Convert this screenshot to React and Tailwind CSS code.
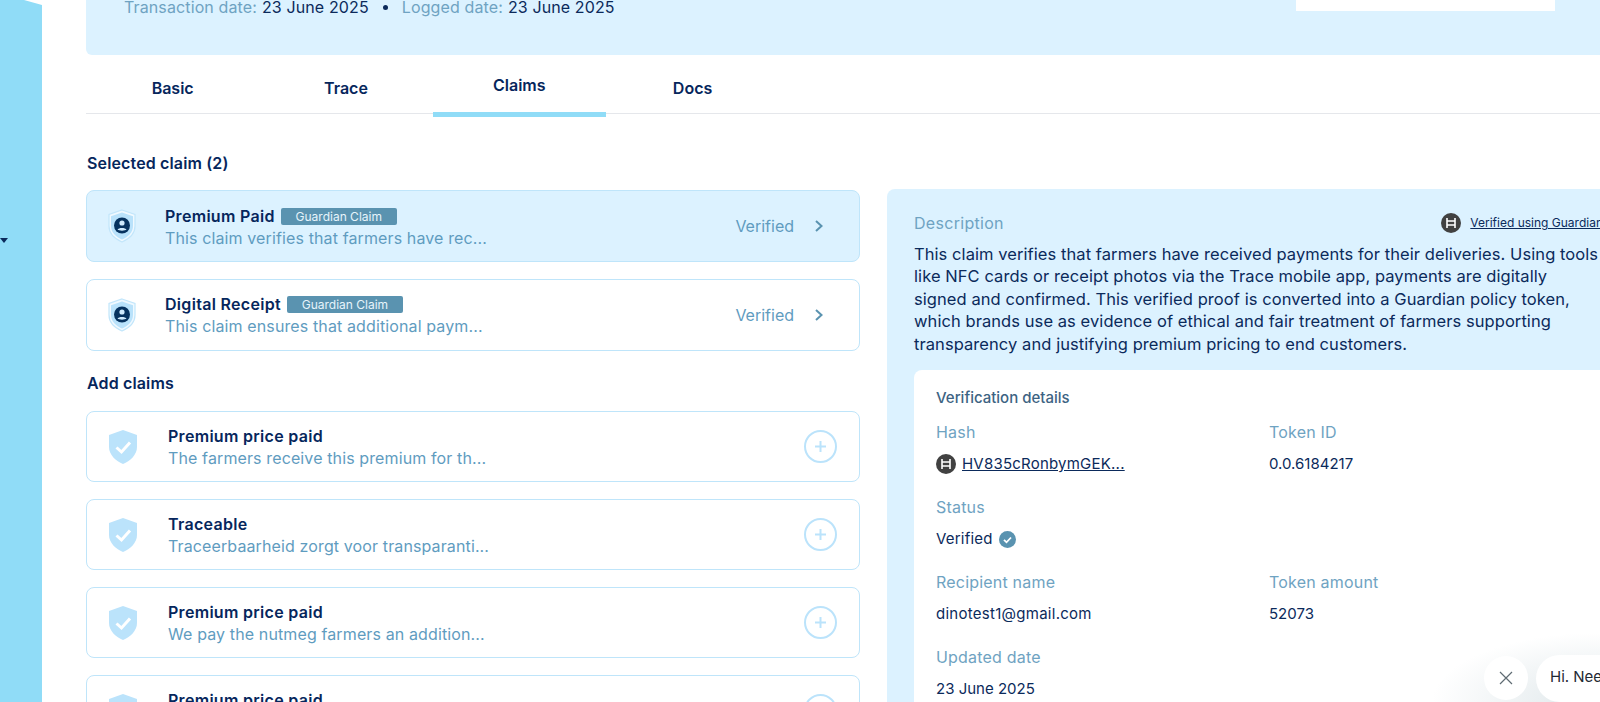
function Hedera({ size = 20 }) {
  return (
    <svg width={size} height={size} viewBox="0 0 20 20" className="shrink-0">
      <circle cx="10" cy="10" r="10" fill="#414141" />
      <path d="M6 5v10M14 5v10M6 8h8M6 12h8" stroke="#fff" strokeWidth="1.6" fill="none" />
    </svg>
  );
}
function ShieldUser() {
  return (
    <svg width="30" height="34" viewBox="0 0 30 34" className="shrink-0">
      <path d="M15 1 L28 5.5 V17 C28 24.5 22 30 15 33 C8 30 2 24.5 2 17 V5.5 Z" fill="#f0f9ff" stroke="#c2e6fb" strokeWidth="1.2" />
      <path d="M15 3.5 L26 7.2 V17 C26 23.5 21 28 15 30.6 C9 28 4 23.5 4 17 V7.2 Z" fill="#b9e2fb" />
      <circle cx="15" cy="16.5" r="8" fill="#06325f" />
      <circle cx="15" cy="14" r="2.6" fill="#cfeafd" />
      <path d="M10.5 20.6 C11.5 18.4 18.5 18.4 19.5 20.6 C18 22 12 22 10.5 20.6 Z" fill="#cfeafd" />
    </svg>
  );
}
function ShieldCheck() {
  return (
    <svg width="28" height="34" viewBox="0 0 28 34" className="shrink-0">
      <path d="M14 0 L28 5 V17 C28 25 21 31 14 34 C7 31 0 25 0 17 V5 Z" fill="#bbe3fb" />
      <path d="M7.5 17.5 L12.5 22 L21 12.5" stroke="#fff" strokeWidth="3" fill="none" />
    </svg>
  );
}
function Selected({ title, desc, active }) {
  return (
    <div className={`h-[72px] rounded-lg border border-[#bfe5fa] flex items-center pl-[20px] pr-[35px] ${active ? "bg-[#dcf2ff]" : "bg-white"}`}>
      <ShieldUser />
      <div className={`ml-[28px] flex-1 min-w-0 ${active ? "pt-[2px]" : "pt-0"}`}>
        <div className="flex items-center h-[22px]">
          <span className="text-[16px] tracking-[0.3px] font-semibold text-[#06265c]">{title}</span>
          <span className="ml-[6px] h-[17px] w-[116px] rounded-[2px] bg-[#5a93b0] text-[#e6f4fb] text-[12px] leading-[17px] text-center">Guardian Claim</span>
        </div>
        <div className="text-[16px] tracking-[0.12px] leading-[22px] text-[#5f9cbf] whitespace-nowrap">{desc}</div>
      </div>
      <span className="text-[16px] text-[#5f9cbf]">Verified</span>
      <svg width="10" height="14" viewBox="0 0 10 14" className="ml-[20px]">
        <path d="M2 2l5.5 5L2 12" stroke="#5a93b0" strokeWidth="2" fill="none" />
      </svg>
    </div>
  );
}
function Addable({ title, desc }) {
  return (
    <div className="h-[71px] rounded-lg border border-[#bfe5fa] bg-white flex items-center pl-[22px] pr-[22px]">
      <ShieldCheck />
      <div className="ml-[31px] flex-1 min-w-0 pt-[1px]">
        <div className="text-[16px] tracking-[0.3px] leading-[22px] font-semibold text-[#06265c]">{title}</div>
        <div className="text-[16px] tracking-[0.12px] leading-[22px] text-[#5f9cbf] whitespace-nowrap">{desc}</div>
      </div>
      <div className="w-[33px] h-[33px] rounded-full border-2 border-[#bbe3fb] flex items-center justify-center">
        <svg width="13" height="13" viewBox="0 0 13 13"><path d="M6.5 1v11M1 6.5h11" stroke="#bbe3fb" strokeWidth="2" /></svg>
      </div>
    </div>
  );
}
function Field({ label, children, className = "" }) {
  return (
    <div className={className}>
      <div className="text-[16px] tracking-[0.2px] leading-[22px] text-[#6fa3c2]">{label}</div>
      <div className="mt-[10px] text-[15px] leading-[22px] text-[#0b2a5b] flex items-center">{children}</div>
    </div>
  );
}
export default function App() {
  return (
    <div className="relative w-[1600px] h-[702px] overflow-hidden bg-white flex font-['Inter',sans-serif]">
      <div className="relative w-[42px] shrink-0 bg-[#90dcf7] [clip-path:polygon(0_0,24px_0,42px_5px,42px_100%,0_100%)]">
        <div className="absolute left-0 top-[238px] w-0 h-0 border-x-[4px] border-x-transparent border-t-[5px] border-t-[#0b2a5b]" />
      </div>
      <main className="ml-[44px] w-[1600px] shrink-0">
        <header className="h-[55px] bg-[#dcf2ff] rounded-bl-md pl-[38px] flex items-start justify-between pr-[45px] w-[1514px]">
          <div className="flex items-center text-[16px] tracking-[0.12px] leading-[16px] text-[#6fa3c2] whitespace-nowrap -mt-[1px]">
            <span>Transaction date:</span><span className="ml-[5px] text-[#0b2a5b]">23 June 2025</span>
            <span className="mx-[14px] w-[5px] h-[5px] rounded-full bg-[#0b2a5b]" />
            <span>Logged date:</span><span className="ml-[5px] text-[#0b2a5b]">23 June 2025</span>
          </div>
          <div className="w-[259px] h-[11px] bg-white" />
        </header>
        <nav className="flex h-[59px] border-b border-[#e5e7eb] w-[1514px]">
          {["Basic", "Trace", "Claims", "Docs"].map((t) => (
            <div key={t} className={`w-[173.3px] text-center text-[16px] font-semibold text-[#06265c] ${t === "Claims" ? "h-[62px] border-b-[5px] border-[#90dcf7] pt-[18px]" : "pt-[21px]"}`}>{t}</div>
          ))}
        </nav>
        <div className="flex mt-[38px]">
          <section className="w-[774px] shrink-0">
            <h2 className="pl-[1px] text-[16px] tracking-[0.14px] leading-[22px] font-semibold text-[#06265c]">Selected claim (2)</h2>
            <div className="mt-[16px] flex flex-col gap-[17px]">
              <Selected active title="Premium Paid" desc="This claim verifies that farmers have rec..." />
              <Selected title="Digital Receipt" desc="This claim ensures that additional paym..." />
            </div>
            <h2 className="pl-[1px] mt-[21px] text-[16px] tracking-[0.14px] leading-[22px] font-semibold text-[#06265c]">Add claims</h2>
            <div className="mt-[17px] flex flex-col gap-[17px]">
              <Addable title="Premium price paid" desc="The farmers receive this premium for th..." />
              <Addable title="Traceable" desc="Traceerbaarheid zorgt voor transparanti..." />
              <Addable title="Premium price paid" desc="We pay the nutmeg farmers an addition..." />
              <Addable title="Premium price paid" desc={"\u00a0"} />
            </div>
          </section>
          <aside className="ml-[27px] mt-[37px] w-[800px] shrink-0 bg-[#dcf2ff] rounded-lg pt-[23px] pl-[27px] pr-[40px] h-[600px]">
            <div className="flex items-center justify-between h-[22px] w-[689px]">
              <span className="text-[16px] tracking-[0.3px] text-[#6fa3c2]">Description</span>
              <span className="flex items-center gap-[9px] whitespace-nowrap">
                <Hedera />
                <span className="text-[12px] underline text-[#0b2a5b]">Verified using Guardian</span>
              </span>
            </div>
            <p className="mt-[9px] text-[16.5px] tracking-[0.07px] leading-[22.4px] text-[#0b2a5b] whitespace-nowrap">
              This claim verifies that farmers have received payments for their deliveries. Using tools<br />
              like NFC cards or receipt photos via the Trace mobile app, payments are digitally<br />
              signed and confirmed. This verified proof is converted into a Guardian policy token,<br />
              which brands use as evidence of ethical and fair treatment of farmers supporting<br />
              transparency and justifying premium pricing to end customers.
            </p>
            <div className="mt-[15px] bg-white rounded-lg pt-[17px] pl-[22px] h-[400px]">
              <div className="text-[15px] leading-[22px] font-medium text-[#3d6383]">Verification details</div>
              <div className="mt-[12px] grid grid-cols-[333px_300px] gap-y-[21px]">
                <Field label="Hash">
                  <Hedera />
                  <span className="ml-[6px] underline tracking-[0.22px]">HV835cRonbymGEK...</span>
                </Field>
                <Field label="Token ID">0.0.6184217</Field>
                <Field label="Status" className="col-span-2">
                  <span className="tracking-[0.2px]">Verified</span>
                  <svg width="17" height="17" viewBox="0 0 17 17" className="ml-[6px]">
                    <circle cx="8.5" cy="8.5" r="8.5" fill="#5a93b0" />
                    <path d="M5 8.8l2.5 2.5L12 6.5" stroke="#fff" strokeWidth="1.8" fill="none" />
                  </svg>
                </Field>
                <Field label="Recipient name"><span className="tracking-[0.27px]">dinotest1@gmail.com</span></Field>
                <Field label="Token amount">52073</Field>
                <Field label="Updated date" className="col-span-2">23 June 2025</Field>
              </div>
            </div>
          </aside>
        </div>
      </main>
      <div className="absolute right-0 bottom-0 w-[170px] h-[70px] bg-[radial-gradient(ellipse_at_100%_100%,#dfe7ea_0%,#ffffff00_70%)] pointer-events-none" />
      <button className="absolute left-[1484px] top-[656px] w-[44px] h-[44px] rounded-full bg-white flex items-center justify-center">
        <svg width="14" height="14" viewBox="0 0 14 14"><path d="M1 1l12 12M13 1L1 13" stroke="#5f6b73" strokeWidth="1.2" /></svg>
      </button>
      <div className="absolute left-[1536px] top-[655px] w-[120px] h-[47px] rounded-l-[24px] bg-white pl-[14px] pt-[12px] text-[15px] leading-[20px] text-[#1f2933] whitespace-nowrap">Hi. Need any help?</div>
    </div>
  );
}
